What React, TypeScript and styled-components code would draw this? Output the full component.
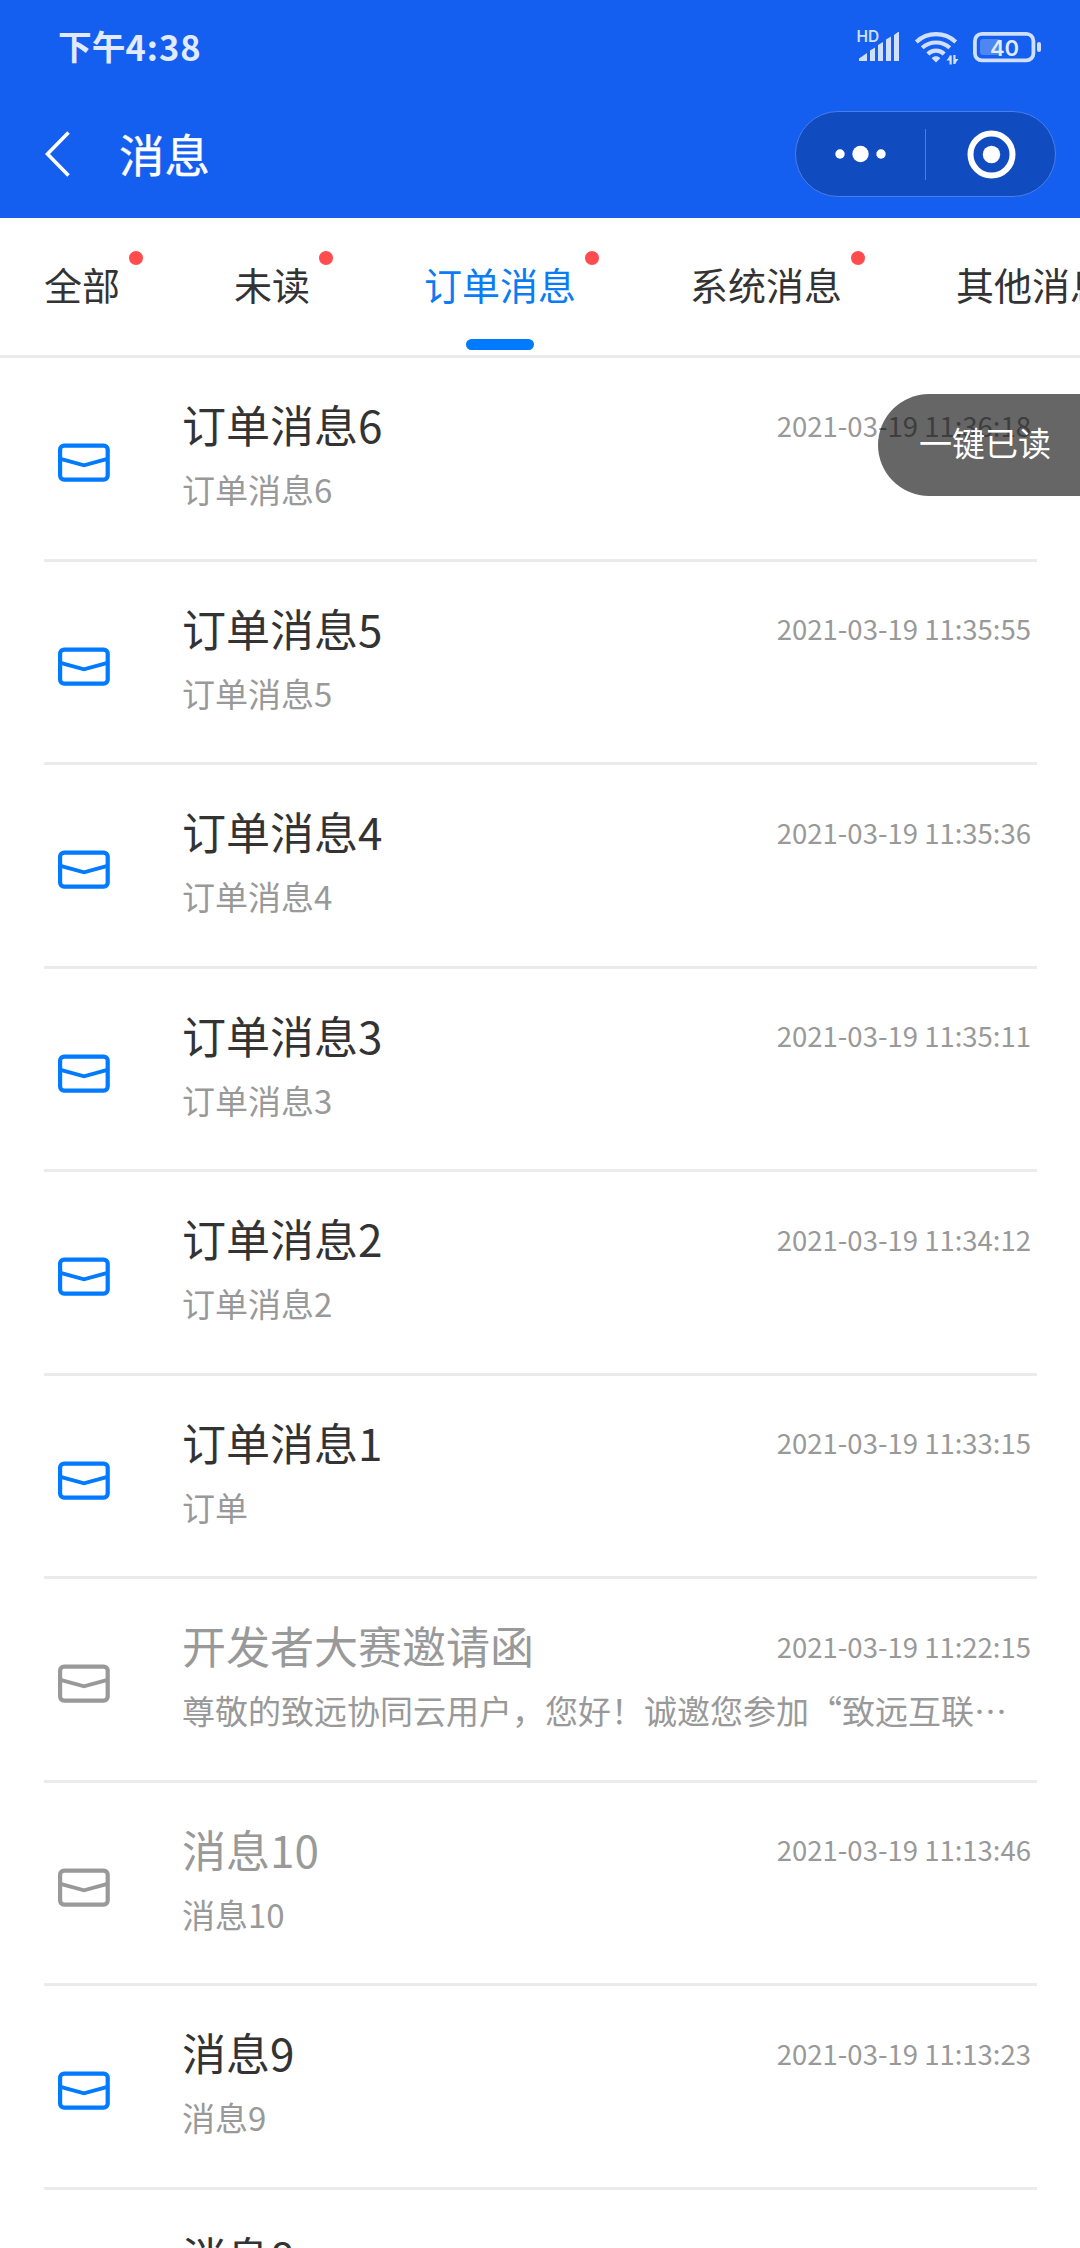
import React from "react";
import styled, { createGlobalStyle } from "styled-components";

const Global = createGlobalStyle`
  *, *::before, *::after { box-sizing: border-box; }
  html, body { margin: 0; padding: 0; background: #fff; }
  body {
    font-family: "Noto Sans CJK SC", "Noto Sans", sans-serif;
    overflow: hidden;
  }
`;

const Screen = styled.div`
  position: relative;
  display: flex;
  flex-direction: column;
  width: 1080px;
  height: 2248px;
  overflow: hidden;
  background: #fff;
`;

const Header = styled.header`
  flex: none;
  height: 218px;
  background: #145ef0;
`;

const StatusBar = styled.div`
  display: flex;
  align-items: center;
  justify-content: space-between;
  height: 94px;
  padding: 0 38px 0 58px;
`;

const Clock = styled.span`
  display: flex;
  font-size: 33.7px;
  font-weight: 700;
  line-height: 48px;
  margin-top: -3px;
  color: #e1ebfd;
`;

const ClockDigits = styled.span`
  font-size: 34.5px;
  letter-spacing: 1px;
`;

const StatusIcons = styled.div`
  display: flex;
  align-items: center;
  gap: 14px;
  height: 40px;
`;

const NavBar = styled.div`
  display: flex;
  align-items: center;
  height: 120px;
  padding: 0 24px 0 44px;
`;

const BackButton = styled.button`
  display: flex;
  margin: 0;
  padding: 0;
  border: 0;
  background: none;
`;

const PageTitle = styled.h1`
  flex: 1;
  margin: -3px 0 0 47px;
  font-size: 45.5px;
  font-weight: 400;
  line-height: 64px;
  color: #fff;
  -webkit-text-stroke: 0.4px #fff;
`;

const Capsule = styled.div`
  display: flex;
  align-items: center;
  width: 261px;
  height: 86px;
  border: 1px solid #4a7de8;
  border-radius: 43px;
  background: #114bc0;
`;

const CapsuleButton = styled.button`
  display: flex;
  flex: 1;
  align-items: center;
  justify-content: center;
  height: 100%;
  margin: 0;
  padding: 0;
  border: 0;
  background: none;
`;

const CapsuleDivider = styled.span`
  width: 1px;
  height: 51px;
  background: #527dd6;
`;

const Tabs = styled.nav`
  display: flex;
  flex: none;
  gap: 114px;
  height: 140.2px;
  padding-left: 44px;
  overflow: hidden;
  border-bottom: 3px solid #ebebeb;
`;

const Tab = styled.div<{ $active?: boolean }>`
  position: relative;
  display: flex;
  flex: none;
  flex-direction: column;
  align-items: center;
  padding-top: 38px;
  font-size: 38px;
  line-height: 56px;
  white-space: nowrap;
  color: ${(p) => (p.$active ? "#0b7cf5" : "#333")};
`;

const TabDot = styled.span`
  position: absolute;
  top: 33px;
  right: -23px;
  width: 14px;
  height: 14px;
  border-radius: 50%;
  background: #ff4d4f;
`;

const TabIndicator = styled.span`
  width: 68px;
  height: 11px;
  margin-top: 27px;
  border-radius: 6px;
  background: #007aff;
`;

const List = styled.main`
  padding: 0 43px 0 44px;
`;

const Row = styled.article`
  display: flex;
  height: 203.5px;
  border-bottom: 3px solid #ebebeb;
`;

const IconCell = styled.div`
  flex: none;
  width: 138px;
  padding: 85px 0 0 14px;
`;

const Body = styled.div`
  flex: 1;
  min-width: 0;
  padding: 36px 6px 0 0;
`;

const TitleLine = styled.div`
  display: flex;
  align-items: center;
  justify-content: space-between;
  height: 60px;
`;

const Title = styled.h2<{ $read?: boolean }>`
  margin: 0;
  font-size: 44px;
  font-weight: 400;
  line-height: 60px;
  color: ${(p) => (p.$read ? "#999" : "#333")};
`;

const Time = styled.time`
  padding-top: 1px;
  font-size: 27.5px;
  line-height: 40px;
  white-space: nowrap;
  color: #999;
`;

const Summary = styled.p`
  margin: 12px 0 0;
  overflow: hidden;
  font-size: 33px;
  line-height: 46px;
  white-space: nowrap;
  color: #999;
`;

const ReadAllButton = styled.button`
  position: absolute;
  top: 394px;
  right: 0;
  width: 202px;
  height: 102px;
  margin: 0;
  padding: 0 0 6px 41px;
  border: 0;
  border-radius: 51px 0 0 51px;
  background: rgba(0, 0, 0, 0.6);
  font-family: inherit;
  font-size: 33px;
  line-height: 46px;
  text-align: left;
  white-space: nowrap;
  color: #fff;
`;

const SignalIcon = () => (
  <svg width="42" height="40" viewBox="0 0 42 40" fill="#cfdffc">
    <text x="-0.500" y="15" fontFamily="Inter, sans-serif" fontSize="15.500" fontWeight="600">HD</text>
    <path d="M2 34v-2.500L10 26v8zM13 34V23.500L18 20.500V34zM21 34V18L26 15V34zM29 34V12.500L34 9.500V34zM37 34V8L41 5H42V34z" />
  </svg>
);

const WifiIcon = () => (
  <svg width="46" height="40" viewBox="0 0 46 40" fill="none" stroke="#cfdffc" strokeWidth="4.200">
    <path d="M3.300 15A28.800 28.800 0 0 1 42.700 15M9.200 20.800A20.600 20.600 0 0 1 36.800 20.800M14.800 27A11.500 11.500 0 0 1 31.200 27" />
    <path d="M23 35.500L18.700 31.200C21 28.600 25 28.600 27.300 31.200z" fill="#cfdffc" stroke="none" />
    <path d="M37.600 37.500V28.500M41.400 28V37" strokeWidth="2.200" />
    <path d="M33.500 33.500L37.500 28V33.500zM41.400 32H45.500L41.400 37.500z" fill="#cfdffc" stroke="none" />
  </svg>
);

const BatteryIcon = () => (
  <svg width="69" height="40" viewBox="0 0 69 40">
    <rect x="1.900" y="6.900" width="58.500" height="26.500" rx="7" fill="none" stroke="#cfdffc" strokeWidth="3.800" />
    <rect x="7" y="12" width="21" height="16" rx="3" fill="#4e86f4" />
    <rect x="64" y="15" width="4" height="10" rx="2" fill="#cfdffc" />
    <text x="31.500" y="28.500" textAnchor="middle" fontFamily="Inter, sans-serif" fontSize="22" fontWeight="600" fill="#e1ebfd">40</text>
  </svg>
);

const BackIcon = () => (
  <svg width="28" height="48" viewBox="0 0 28 48" fill="none" stroke="#fff" strokeWidth="3.600">
    <path d="M24.500 2.500L3.500 24L24.500 45.500" />
  </svg>
);

const MoreIcon = () => (
  <svg width="52" height="18" viewBox="0 0 52 18" fill="#fff">
    <circle cx="5" cy="9" r="4.700" />
    <circle cx="25.500" cy="9" r="8.200" />
    <circle cx="46" cy="9" r="4.700" />
  </svg>
);

const TargetIcon = () => (
  <svg width="50" height="50" viewBox="0 0 50 50">
    <circle cx="25.500" cy="25.500" r="21" fill="none" stroke="#fff" strokeWidth="6" />
    <circle cx="25.500" cy="25.500" r="8.700" fill="#fff" />
  </svg>
);

const MailIcon = ({ color }: { color: string }) => (
  <svg width="52" height="39" viewBox="0 0 52 39" fill="none" stroke={color} strokeWidth="4.200">
    <rect x="2.100" y="2.600" width="47.600" height="34" rx="4" />
    <path d="M2.500 15.800L26 22.300L49.500 15.800" strokeWidth="3.900" />
  </svg>
);

type Message = { title: string; summary: string; time: string; read?: boolean };

const messages: Message[] = [
  { title: "订单消息6", summary: "订单消息6", time: "2021-03-19 11:36:18" },
  { title: "订单消息5", summary: "订单消息5", time: "2021-03-19 11:35:55" },
  { title: "订单消息4", summary: "订单消息4", time: "2021-03-19 11:35:36" },
  { title: "订单消息3", summary: "订单消息3", time: "2021-03-19 11:35:11" },
  { title: "订单消息2", summary: "订单消息2", time: "2021-03-19 11:34:12" },
  { title: "订单消息1", summary: "订单", time: "2021-03-19 11:33:15" },
  {
    title: "开发者大赛邀请函",
    summary: "尊敬的致远协同云用户，您好！诚邀您参加“致远互联…",
    time: "2021-03-19 11:22:15",
    read: true,
  },
  { title: "消息10", summary: "消息10", time: "2021-03-19 11:13:46", read: true },
  { title: "消息9", summary: "消息9", time: "2021-03-19 11:13:23" },
  { title: "消息8", summary: "", time: "" },
];

const tabs = [
  { label: "全部", dot: true },
  { label: "未读", dot: true },
  { label: "订单消息", dot: true, active: true },
  { label: "系统消息", dot: true },
  { label: "其他消息", dot: false },
];

export default function App() {
  return (
    <Screen lang="zh-CN">
      <Global />
      <Header>
        <StatusBar>
          <Clock>
            下午<ClockDigits>4:38</ClockDigits>
          </Clock>
          <StatusIcons>
            <SignalIcon />
            <WifiIcon />
            <BatteryIcon />
          </StatusIcons>
        </StatusBar>
        <NavBar>
          <BackButton aria-label="返回">
            <BackIcon />
          </BackButton>
          <PageTitle>消息</PageTitle>
          <Capsule>
            <CapsuleButton>
              <MoreIcon />
            </CapsuleButton>
            <CapsuleDivider />
            <CapsuleButton>
              <TargetIcon />
            </CapsuleButton>
          </Capsule>
        </NavBar>
      </Header>
      <Tabs>
        {tabs.map((t) => (
          <Tab key={t.label} $active={t.active}>
            {t.label}
            {t.dot && <TabDot />}
            {t.active && <TabIndicator />}
          </Tab>
        ))}
      </Tabs>
      <List>
        {messages.map((m) => (
          <Row key={m.title}>
            <IconCell>
              <MailIcon color={m.read ? "#999" : "#007aff"} />
            </IconCell>
            <Body>
              <TitleLine>
                <Title $read={m.read}>{m.title}</Title>
                <Time>{m.time}</Time>
              </TitleLine>
              <Summary>{m.summary}</Summary>
            </Body>
          </Row>
        ))}
      </List>
      <ReadAllButton>一键已读</ReadAllButton>
    </Screen>
  );
}
